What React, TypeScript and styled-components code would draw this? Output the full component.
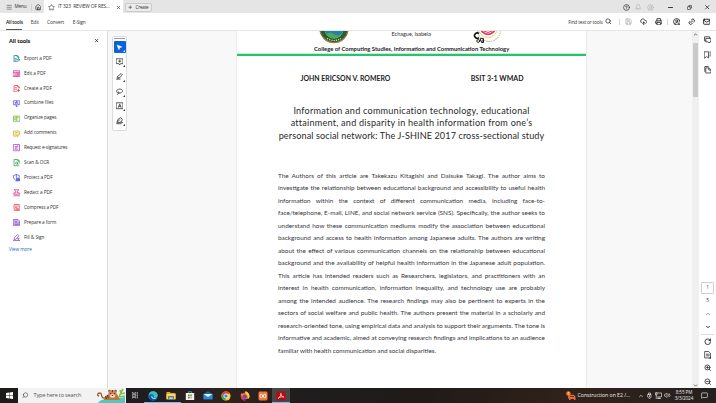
import React from "react";
import styled, { createGlobalStyle, css } from "styled-components";
import {
  Menu, House, Star, X, Plus, Search, Save, CloudUpload, Printer, Link2, Mail, Bell, CircleHelp, CircleUserRound,
  Minus, Copy, ChevronUp, ChevronDown, RotateCw, ZoomIn, ZoomOut, MousePointer2, Volume2, MessageSquare as Note,
} from "lucide-react";

const Global = createGlobalStyle`
  * { box-sizing: border-box; }
  body { margin: 0; overflow: hidden; background: #fff; font-family: "Open Sans", "Noto Sans", sans-serif; }
  svg { display: block; flex: none; }
`;

const Window = styled.div`
  width: 716px; height: 403px; display: grid; grid-template-rows: 13px 18px 357px 15px;
  background: #fff; color: #333; overflow: hidden;
`;
const Text = styled.span<{ $size?: number; $ls?: number; $w?: number; $color?: string }>`
  font-size: ${(p) => p.$size ?? 5}px; letter-spacing: ${(p) => p.$ls ?? 0}px; font-weight: ${(p) => p.$w ?? 400};
  color: ${(p) => p.$color ?? "#303030"}; white-space: pre; line-height: 1.2;
`;
const Spacer = styled.div`flex: 1;`;
const Gap = styled.div<{ $w: number }>`flex: 0 0 ${(p) => p.$w}px;`;

const TabBar = styled.header`display: flex; align-items: center; background: #e5e5e5; height: 13px; padding-top: 1.5px;`;
const MenuButton = styled.div`display: flex; align-items: center; gap: 2.5px; width: 31px; padding-left: 5.5px;`;
const HomeButton = styled.div`width: 13px; display: flex; justify-content: center; border-left: 1px solid #d0d0d0;`;
const Tab = styled.div`
  display: flex; align-items: center; width: 78.5px; height: 13px; margin-top: -1.5px; padding: 1.5px 5.5px 0 4px; background: #fff; gap: 3px;
`;
const CreateButton = styled.div`
  display: flex; align-items: center; gap: 3px; width: 27px; height: 9.5px; margin-left: 2px; padding-left: 2.5px;
  border: 1px solid #cacaca; border-radius: 2px; background: #ececec;
`;
const Toolbar = styled.nav`
  display: flex; align-items: center; height: 18px; border-bottom: 1px solid #e6e6e6; background: #fff; padding-left: 6px;
`;
const NavItem = styled.div<{ $w: number; $active?: boolean }>`
  width: ${(p) => p.$w}px; height: 17px; padding-top: 2px; display: flex; align-items: center;
  ${(p) => p.$active && css`box-shadow: inset 0 -1px #555;`}
`;
const FindBox = styled.div`display: flex; align-items: center; padding-top: 2px;`;
const Slot = styled.div<{ $w: number }>`width: ${(p) => p.$w}px; display: flex; justify-content: center; align-items: center;`;
const Divider = styled.div`width: 1px; height: 6px; background: #d5d5d5;`;

const Main = styled.div`display: grid; grid-template-columns: 108px 584px 7px 17px; min-height: 0;`;
const Panel = styled.aside`border-right: 1px solid #dedede; background: #fff;`;
const PanelHead = styled.div`display: flex; align-items: center; justify-content: space-between; height: 20px; padding: 0 7.5px 0 9px;`;
const ToolRow = styled.div`display: flex; align-items: center; height: 14.95px; padding-left: 12.5px; gap: 4.2px;`;
const ViewMore = styled.div`padding-left: 9px; height: 10px; display: flex; align-items: center;`;

const Canvas = styled.main`display: flex; align-items: flex-start; background: #f8f8f8; overflow: hidden;`;
const QuickBar = styled.div`
  width: 15px; height: 95px; margin: 4.5px 0 0 4px; display: flex; flex-direction: column; align-items: center;
  background: #fff; border: 1px solid #dcdcdc; border-radius: 2px;
`;
const Grip = styled.div`width: 11px; height: 1px; margin: 1.5px 0 2.2px; background: #999;`;
const Quick = styled.div<{ $active?: boolean }>`
  position: relative; width: 12px; height: 12.5px; margin-bottom: 2.5px; display: flex; align-items: center; justify-content: center;
  color: ${(p) => (p.$active ? "#fff" : "#333")}; background: ${(p) => (p.$active ? "#0b62dc" : "transparent")};
  border-radius: 1px;
  &::after {
    content: ""; position: absolute; right: 0.5px; bottom: 1px; border-style: solid; border-width: 0 0 2px 2px;
    border-color: transparent transparent currentColor transparent;
  }
`;
const Page = styled.article`
  width: 349px; height: 357px; margin-left: 110px; background: #fff; box-shadow: 0 0 0 1px #ececec;
  font-family: Lato, "Liberation Sans", sans-serif; color: #222;
`;
const PageHead = styled.div`height: 13px; display: flex; align-items: flex-start;`;
const College = styled.div`height: 9px; display: flex; align-items: center; padding-left: 77px;`;
const Rule = styled.div`height: 3px; border-top: 1px solid #c2efd5; border-bottom: 2px solid #25c56e;`;
const Authors = styled.div`height: 22px; margin-top: 11px; padding-left: 63.5px; display: flex; align-items: center;`;
const Title = styled.h1`
  margin: 15.5px 0 0; font-size: 9.1px; font-weight: 400; line-height: 12.5px; text-align: center; color: #2a2a2a; white-space: nowrap;
`;
const TitleLine = styled.div<{ $ls: number }>`letter-spacing: ${(p) => p.$ls}px;`;
const Body = styled.div`margin: 27.5px 41px 0 41px; font-size: 6.4px; line-height: 12.54px; color: #35353d;`;
const BodyLine = styled.div<{ $last?: boolean }>`
  width: 267px; white-space: nowrap; height: 12.54px; word-spacing: -0.2px; text-align-last: ${(p) => (p.$last ? "left" : "justify")};
`;

const ScrollTrack = styled.div`background: #f0f0f0; display: flex; flex-direction: column; align-items: center; color: #555;`;
const Thumb = styled.div`width: 5.5px; height: 54px; margin: 6px 0 auto; background: #c9c9c9;`;
const Rail = styled.aside`display: flex; flex-direction: column; align-items: center; background: #fff; color: #333;`;
const RailItem = styled.div<{ $h: number }>`height: ${(p) => p.$h}px; display: flex; align-items: center; justify-content: center;`;
const PageBox = styled.div`width: 13px; height: 12px; margin-top: 1px; border: 1px solid #cfcfcf; border-radius: 1px; display: flex; align-items: center; justify-content: center;`;
const RailRule = styled.div`width: 13px; height: 1px; background: #ddd;`;

const Taskbar = styled.footer`
  display: flex; align-items: center; height: 15px; color: #eee;
  background: linear-gradient(90deg, #1d1b1a 0, #1f1d20 20%, #30231e 32%, #1f1d1d 42%, #201b19 60%, #31221b 80%, #242120 100%);
`;
const SearchBox = styled.div`width: 108px; height: 15px; background: #f2f2f2; display: flex; align-items: center; padding-left: 4px; gap: 5px; overflow: hidden;`;
const TaskButton = styled.div<{ $open?: boolean; $active?: boolean }>`
  width: 18.3px; height: 15px; display: flex; align-items: center; justify-content: center;
  background: ${(p) => (p.$active ? "#4a4748" : "transparent")};
  ${(p) => (p.$open || p.$active) && css`box-shadow: inset 0 -1px #76b9ed;`}
`;
const Clock = styled.div`width: 20px; display: flex; flex-direction: column; align-items: center; gap: 0.8px;`;

const Stroke = styled.svg<{ $color?: string; $weight?: number }>`
  fill: none; stroke: ${(p) => p.$color ?? "currentColor"}; stroke-width: ${(p) => p.$weight ?? 1.5};
  stroke-linecap: round; stroke-linejoin: round; color: ${(p) => p.$color ?? "inherit"};
`;
const Glyph = ({ size = 7.5, color, weight, children }: { size?: number; color?: string; weight?: number; children: React.ReactNode }) => (
  <Stroke width={size} height={size} viewBox="0 0 14 14" $color={color} $weight={weight}>{children}</Stroke>
);

const tools: [string, string, number, React.ReactNode][] = [
  ["Export a PDF", "#138b8c", -0.08, <><path d="M11 6V4L8 1H2v12h8M8 1v3h3M4 7h2M4 10h2" /><path d="M7 9h6m-2-2 2 2-2 2" /></>],
  ["Edit a PDF", "#d83790", -0.06, <><path d="M1 1.5h12v11H1ZM1 4.5h12M7.5 4.5v8M3 7.5h2.5M3 10h2.5" /><path d="M9.5 7h2v3h-2z" /></>],
  ["Create a PDF", "#e34850", -0.05, <><path d="M12 6V4L9 1H2v12h5M9 1v3h3M4.5 5h2M4.5 8h3" /><path d="M10.5 8v5M8 10.5h5" /></>],
  ["Combine files", "#5c5ce0", -0.04, <><path d="M4 9H1V1.5h6v2M7 3.5V1.5h6V9h-3" /><path d="M4.5 5h5v3.5M4.5 5v3.5M7 7v6m-2-2 2 2 2-2" /></>],
  ["Organize pages", "#71b53b", -0.13, <><path d="M6 2H1v10h5M8 2h5v10H8zM6 5H3.5v4H6M8 5h2" /></>],
  ["Add comments", "#d0ad12", -0.08, <><path d="M12 7V2H1v9h2v2l2.5-2H7M4 5h5M4 8h3" /><path d="m8 12 .5-2L12 6.5l1.5 1.5L10 11.5z" /></>],
  ["Request e-signatures", "#b848cb", -0.16, <><path d="M1.5 1h11v12h-11zM4 10h6M4 5h1" /><path d="m5 8 1-2.5L9 3l1 1-2.5 3z" /></>],
  ["Scan & OCR", "#31a354", -0.08, <><path d="M12 8V4L9 1H2v12h8M9 1v3h3" /><circle cx="7" cy="8" r="2" /><path d="m8.5 9.5 3 3" /></>],
  ["Protect a PDF", "#5258e4", -0.1, <><path d="M6.5 13C3 11 1 9 1 6V3l5.5-2L12 3v3M6.5 1v12" /><path fill="currentColor" d="M8 9.5h5v3.5H8z" /><path d="M9 9V7.5h3V9" /></>],
  ["Redact a PDF", "#d83790", -0.06, <><path d="M3 1.5h8L8.5 5v2.5h4V10h-11V7.5h4V5ZM1.5 13h11" /></>],
  ["Compress a PDF", "#e34850", -0.12, <><path d="M12 7V1H2v9h5M4.5 4h5M4.5 7h3" /><path d="M2 13h4M8 9h4v4H8zM9 11h2" /></>],
  ["Prepare a form", "#8f4fd0", -0.09, <><path fill="#d9c1f1" d="M1.5 1h8l3 3v9h-11z" /><path d="M4 4.5h3M4 7.5h6M4 10.5h6" /></>],
  ["Fill & Sign", "#8f4fd0", -0.08, <><path d="M1 12.5h12M2 10l1-3.5L9 1l2.5 2.5L6 9.5zM8 9l4-1-2 3" /></>],
];

const quick: React.ReactNode[] = [
  <MousePointer2 size={6.5} strokeWidth={2} fill="#fff" />,
  <Glyph><path d="M1 1.5h12v9H8.5L7 13l-1.5-2.5H1zM7 4v4M5 6h4" /></Glyph>,
  <Glyph><path d="m2 10 1-3.5L9.5 1 12 3.5 6 9.5zM3.5 7 6 9.5M1 13h5l2-1.5" /></Glyph>,
  <Glyph><path d="M3 9C-.5 7 1 2 7 2s7 5.5 2 7c-3 1-5 .5-5-1s2-1 1.5 1S4 12 2.5 12" /></Glyph>,
  <Glyph><path d="M1 1.5h12v11H1zM4.5 10 7 4l2.5 6M5.5 8h3" /></Glyph>,
  <Glyph><path d="M1 12.5h9M2 9.5 4 4l5-3 3 4-3 4.5zM3 9l4-4M9 9.5l4 1" /></Glyph>,
];

const bodyLines = [
  "The Authors of this article are Takekazu Kitagishi and Daisuke Takagi. The author aims to",
  "investigate the relationship between educational background and accessibility to useful health",
  "information within the context of different communication media, including face-to-",
  "face/telephone, E-mail, LINE, and social network service (SNS). Specifically, the author seeks to",
  "understand how these communication mediums modify the association between educational",
  "background and access to health information among Japanese adults. The authors are writing",
  "about the effect of various communication channels on the relationship between educational",
  "background and the availability of helpful health information in the Japanese adult population.",
  "This article has intended readers such as Researchers, legislators, and practitioners with an",
  "interest in health communication, information inequality, and technology use are probably",
  "among the intended audience. The research findings may also be pertinent to experts in the",
  "sectors of social welfare and public health. The authors present the material in a scholarly and",
  "research-oriented tone, using empirical data and analysis to support their arguments. The tone is",
  "informative and academic, aimed at conveying research findings and implications to an audience",
  "familiar with health communication and social disparities.",
];

const SealLogo = () => (
  <svg width="30" height="13" viewBox="0 0 30 13">
    <circle cx="15" cy="-2.5" r="14.2" fill="#245f38" stroke="#a47c3d" strokeWidth="1.2" />
    <circle cx="15" cy="-2" r="9.4" fill="#e9d34b" />
    <path d="M6 0h18c-1 4-4 7-9 7S7 4 6 0Z" fill="#2380ac" />
    <path d="M7 3q4-3 8 0t8-1c-2 4-5 5-8 5s-6-1-8-4Z" fill="#50a65a" />
    <path d="M8 7.5q7 4 14 0" fill="none" stroke="#dfe9c7" strokeWidth="1.1" strokeDasharray="1.2 1.1" />
  </svg>
);
const GearLogo = () => (
  <svg width="30" height="14" viewBox="0 0 30 14">
    <circle cx="17" cy="-1" r="11.5" fill="#fff" stroke="#c9c0ac" strokeWidth="1.2" strokeDasharray="1.6 .8" />
    <circle cx="16" cy="-3" r="9.5" fill="#fff" stroke="#f0cf6c" strokeWidth="1" />
    <circle cx="16" cy="-4" r="7.3" fill="#fff" stroke="#e72f62" strokeWidth="1.8" />
    <path d="M12 0l4 1.5L20 0" fill="none" stroke="#d93a4d" strokeWidth="1" />
    <path d="M7 2.5A2.7 2.7 0 1 0 7 6.7" fill="none" stroke="#171717" strokeWidth="1.7" />
    <circle cx="6.2" cy="10" r="1.4" fill="none" stroke="#222" />
    <circle cx="9.9" cy="8.8" r="1.6" fill="none" stroke="#222" strokeWidth="1.1" />
    <path d="M11.5 7.5v4H9.3" fill="none" stroke="#222" />
  </svg>
);
const Tiger = () => (
  <svg width="29" height="15" viewBox="0 0 29 15">
    <path d="M1 15q2-4 11-4t16-2v6Z" fill="#58c6bf" />
    <path d="M22 9q2-5 4-8m-3 5 5-1m-6 4 6-1M24 5l-1-3" stroke="#83bf49" strokeWidth="1.6" fill="none" />
    <path d="M8 10C3 11 6 5 3 5S0 8 2 8" fill="none" stroke="#9b572d" strokeWidth="1.3" />
    <path d="M7 12q0-5 6-6h7l3 6Z" fill="#b97542" />
    <circle cx="12.5" cy="3" r="1.3" fill="#8c512d" /><circle cx="18.5" cy="3" r="1.3" fill="#8c512d" />
    <ellipse cx="15.5" cy="6" rx="4.2" ry="4" fill="#c98550" />
    <ellipse cx="15.5" cy="8" rx="2.5" ry="1.8" fill="#f1dfc9" />
    <path d="M13 5.5h1m3 0h1m-3.2 2h1.4M15.5 2v2M8.5 8l1 3m1-4 .5 3" stroke="#3d2a22" strokeWidth=".8" />
  </svg>
);
const Edge = () => (
  <svg width="10" height="10" viewBox="0 0 10 10">
    <circle cx="5" cy="5" r="4.7" fill="#1475c4" />
    <path d="M.4 4.6C.8 1.8 2.8.3 5 .3c3 0 4.8 2.2 4.7 4.3-.1 1.7-1.6 2.3-3 2.1-1-.1-1.4-.6-.8-1.2C6.8 3 2 2 .4 4.6Z" fill="#3ac5b1" />
    <path d="M3.6 4.7C2.4 7 5 9 8.4 8.2 6 10.9 1.4 9.3 1.4 6.4c0-1 .8-2 2.2-1.7Z" fill="#0c4f9b" />
    <path d="M4.2 4.7c-.8 1.8 1.6 3 4.6 2.1-1.7 1.7-5.5 1.2-5.6-1Z" fill="#d9f1fa" />
  </svg>
);
const Folder = () => (
  <svg width="10" height="9" viewBox="0 0 10 9"><path d="M.5 1h3.3l1 1h4.7v6.3h-9Z" fill="#e9a623" /><path d="M.5 3h9v5.3h-9Z" fill="#ffd75b" /><path d="M2 5h6v3.3H6.7V6.6H3.3v1.7H2Z" fill="#3a8bd2" /></svg>
);
const Store = () => (
  <svg width="10" height="10" viewBox="0 0 10 10"><path d="M3.3 2V.8h3.4V2" fill="none" stroke="#35b3e8" strokeWidth=".8" /><path d="M.8 2h8.4v7H.8Z" fill="#f3f3f3" /><path d="M3 3.5h1.7v1.7H3Z" fill="#e44b2c" /><path d="M5.3 3.5H7v1.7H5.3Z" fill="#69a91d" /><path d="M3 5.8h1.7v1.7H3Z" fill="#1d91d0" /><path d="M5.3 5.8H7v1.7H5.3Z" fill="#f5b51a" /></svg>
);
const MailApp = () => (
  <svg width="10" height="9" viewBox="0 0 10 9"><path d="M.5 3 5 .3 9.5 3v5.3h-9Z" fill="#1069b5" /><path d="M.5 3h9v5.3h-9Z" fill="#258bdc" /><path d="M.7 3h8.6L5 6Z" fill="#f3f8fb" /></svg>
);
const Chrome = () => (
  <svg width="10" height="10" viewBox="0 0 10 10"><circle cx="5" cy="5" r="4.6" fill="#f9c932" /><path d="M1 2.7a4.6 4.6 0 0 1 8 0H5L3 6Z" fill="#e54335" /><path d="M1 2.7 3.2 6.1l2 1.2L4 9.5A4.6 4.6 0 0 1 1 2.7Z" fill="#34a853" /><circle cx="5" cy="5" r="2.1" fill="#4285f4" stroke="#fff" strokeWidth=".7" /></svg>
);
const Firefox = () => (
  <svg width="10" height="10" viewBox="0 0 10 10"><path d="M1.2 2 2 3 3.2 1.8 4 3l1.4-2.8C8 1 9.5 3 9.5 5.6A4.4 4.4 0 1 1 1.2 2Z" fill="#ff7c27" /><path d="M5.4.2C8 1 9.5 3 9.5 5.6c0 1-.4 2-1 2.7Q8 3.5 5.4 2.7Z" fill="#ffd035" /><circle cx="4.8" cy="5.7" r="2.1" fill="#7544bc" /><path d="M.7 4.8C.4 8.5 3.5 10.3 6 9.7 3.5 9 2.5 7 2.6 5Z" fill="#ed315d" /></svg>
);
const Xampp = () => (
  <svg width="10" height="10" viewBox="0 0 10 10"><rect x=".5" y=".5" width="9" height="9" rx="1.4" fill="#ef7934" /><path d="M3.3 3q-1.5 0-1.3 2t1.3 2M6.7 3Q8.2 3 8 5T6.7 7M3.5 3 6.5 7m0-4-3 4" fill="none" stroke="#fff" strokeWidth=".9" /></svg>
);
const Acrobat = () => (
  <svg width="10" height="10" viewBox="0 0 10 10"><rect x=".4" y=".4" width="9.2" height="9.2" rx="1" fill="#b40c0c" /><path d="M2.2 7.4C4 6.5 5 4 4.9 2.3c0 2 1.3 3.6 3 3.7C6 5.4 3.5 6 2.2 7.4Z" fill="none" stroke="#fff" strokeWidth=".7" /></svg>
);
const Traffic = () => (
  <svg width="10" height="10" viewBox="0 0 10 10"><path d="M2 7V5.7l1.2-2h4.6L9.5 5.7V9H8V8H4.5v1H3V8Z" fill="#ea6a34" /><circle cx="2.4" cy="2.5" r="2.2" fill="#f18127" /><path d="M2.4 1.2v1.4m0 .5v.6" stroke="#fff" strokeWidth=".6" /><path d="M4 5.5h4" stroke="#35211b" strokeWidth=".7" /></svg>
);
const WindowsLogo = () => (
  <svg width="7" height="7" viewBox="0 0 7 7"><path d="M0 1 3.2.5v2.8H0ZM3.6.4 7 0v3.3H3.6ZM0 3.7h3.2v2.8L0 6ZM3.6 3.7H7V7l-3.4-.5Z" fill="#fff" /></svg>
);

export default function App() {
  return (
    <Window>
      <Global />
      <TabBar>
        <MenuButton><Menu size={6.5} color="#444" /><Text $size={4.7} $ls={-0.17}>Menu</Text></MenuButton>
        <HomeButton><House size={6.5} color="#222" strokeWidth={2.4} /></HomeButton>
        <Tab>
          <Star size={7} color="#333" />
          <Text $size={4.9} $ls={-0.13}>IT 323  REVIEW OF RES...</Text>
          <Spacer /><X size={5} color="#333" strokeWidth={3} />
        </Tab>
        <CreateButton><Plus size={4.5} color="#333" strokeWidth={3} /><Text $size={4.5} $ls={-0.14}>Create</Text></CreateButton>
        <Spacer />
        <Slot $w={12}><CircleHelp size={7} color="#333" strokeWidth={2.4} /></Slot>
        <Slot $w={12}><Bell size={6.5} color="#aaa" /></Slot>
        <Slot $w={12}><CircleUserRound size={7} color="#b4b4b4" /></Slot>
        <Gap $w={8.5} />
        <Slot $w={11}><Minus size={7} color="#222" strokeWidth={3} /></Slot>
        <Gap $w={7.5} />
        <Slot $w={11}><Copy size={5} color="#222" strokeWidth={3} transform="scale(-1 1)" /></Slot>
        <Gap $w={7} />
        <Slot $w={11}><X size={6.5} color="#222" strokeWidth={2.8} /></Slot>
        <Gap $w={3.5} />
      </TabBar>
      <Toolbar>
        <NavItem $w={16} $active><Text $size={4.9} $ls={-0.22} $w={600} $color="#222">All tools</Text></NavItem>
        <Gap $w={8.7} />
        <NavItem $w={16.3}><Text $size={4.8} $ls={-0.05}>Edit</Text></NavItem>
        <NavItem $w={25.7}><Text $size={4.8} $ls={-0.05}>Convert</Text></NavItem>
        <NavItem $w={20}><Text $size={4.8} $ls={-0.1}>E-Sign</Text></NavItem>
        <Spacer />
        <FindBox><Text $size={4.8} $ls={-0.2}>Find text or tools</Text></FindBox>
        <Slot $w={12}><Search size={6.5} strokeWidth={2.8} /></Slot>
        <Gap $w={4} /><Divider /><Gap $w={1.5} />
        <Slot $w={15}><Save size={7} color="#999" /></Slot>
        <Slot $w={15}><CloudUpload size={7.5} color="#222" strokeWidth={2.7} /></Slot>
        <Slot $w={15}><Printer size={7.5} color="#222" strokeWidth={2.7} /></Slot>
        <Gap $w={1} /><Divider /><Gap $w={1} />
        <Slot $w={15}><Glyph color="#222"><path d="M7 13A6 6 0 1 1 13 7" /><circle cx="7" cy="5.5" r="2" /><path d="M3 11q1-3 5-3M11 9v5M8.5 11.5h5" /></Glyph></Slot>
        <Slot $w={15}><Link2 size={7.5} color="#222" strokeWidth={2.7} transform="rotate(-45)" /></Slot>
        <Slot $w={15}><Mail size={7.5} color="#222" strokeWidth={3} /></Slot>
        <Gap $w={2} />
      </Toolbar>
      <Main>
        <Panel>
          <PanelHead><Text $size={5.6} $w={700} $ls={-0.15} $color="#222">All tools</Text><X size={5.2} color="#222" strokeWidth={3.5} /></PanelHead>
          {tools.map(([name, color, ls, drawing]) => (
            <ToolRow key={name}><Glyph size={7.3} color={color}>{drawing}</Glyph><Text $size={4.75} $ls={ls}>{name}</Text></ToolRow>
          ))}
          <ViewMore><Text $size={4.8} $ls={-0.1} $color="#1667b5">View more</Text></ViewMore>
        </Panel>
        <Canvas>
          <QuickBar>
            <Grip />
            {quick.map((drawing, i) => <Quick key={i} $active={i === 0}>{drawing}</Quick>)}
          </QuickBar>
          <Page>
            <PageHead>
              <Gap $w={81.5} /><SealLogo /><Gap $w={43} />
              <Text $size={5.5} $color="#333">Echague, Isabela</Text>
              <Spacer /><GearLogo /><Gap $w={84} />
            </PageHead>
            <College><Text $size={5.86} $w={700} $color="#222">College of Computing Studies, Information and Communication Technology</Text></College>
            <Rule />
            <Authors>
              <Text $size={6.9} $w={700} $color="#1b1b1b">JOHN ERICSON V. ROMERO</Text>
              <Spacer /><Text $size={7} $w={700} $color="#1b1b1b">BSIT 3-1 WMAD</Text><Gap $w={62.5} />
            </Authors>
            <Title>
              <TitleLine $ls={0.23}>Information and communication technology, educational</TitleLine>
              <TitleLine $ls={0.23}>attainment, and disparity in health information from one’s</TitleLine>
              <TitleLine $ls={0.105}>personal social network: The J-SHINE 2017 cross-sectional study</TitleLine>
            </Title>
            <Body>
              {bodyLines.map((line, i) => <BodyLine key={line} $last={i === bodyLines.length - 1}>{line}</BodyLine>)}
            </Body>
          </Page>
        </Canvas>
        <ScrollTrack>
          <RailItem $h={6}><ChevronUp size={5} strokeWidth={4} /></RailItem>
          <Thumb />
          <RailItem $h={6}><ChevronDown size={5} strokeWidth={4} /></RailItem>
        </ScrollTrack>
        <Rail>
          <Gap $w={1.5} />
          <RailItem $h={14.8}><Glyph><path d="M3.5 9H1V1.5h9.5V4" /><path d="M4 4.5h9V11h-2l-1.5 2L8 11H4z" /></Glyph></RailItem>
          <RailItem $h={15}><Glyph><path d="M1 1.5h7.5V13L5 10.5 1 13zM11 2h2M11 5.5h2M11 9h2" /></Glyph></RailItem>
          <RailItem $h={15}><Glyph><path d="M4 3.5h5.5L13 7v6H4zM9 4v3.5h4" /><path d="M1.5 10V1H8" /></Glyph></RailItem>
          <Spacer />
          <PageBox><Text $size={4.5} $color="#27476b">1</Text></PageBox>
          <RailItem $h={14}><Text $size={4.8}>5</Text></RailItem>
          <RailItem $h={13}><ChevronUp size={6} color="#777" strokeWidth={3} /></RailItem>
          <RailItem $h={13}><ChevronDown size={6} strokeWidth={4} /></RailItem>
          <RailRule />
          <RailItem $h={13.3}><RotateCw size={7.5} strokeWidth={3} /></RailItem>
          <RailItem $h={13.3}><Glyph><path d="M2 1h6.5L12 4v9H2zM4.5 6h5M4.5 9h5" /><path fill="currentColor" d="m13.5 11v2.5H11z" /></Glyph></RailItem>
          <RailItem $h={13.3}><ZoomIn size={7.5} strokeWidth={2.8} /></RailItem>
          <RailItem $h={13.3}><ZoomOut size={7.5} strokeWidth={2.8} /></RailItem>
        </Rail>
      </Main>
      <Taskbar>
        <Slot $w={18}><WindowsLogo /></Slot>
        <SearchBox>
          <Search size={6.5} color="#333" transform="scale(-1 1)" />
          <Text $size={5.6} $ls={-0.2} $color="#555">Type here to search</Text>
          <Spacer /><Tiger />
        </SearchBox>
        <Slot $w={18}><Glyph size={6.5} color="#ddd"><path d="M1 1v1.5h7V1M1 13v-1.5h7V13M1 5h7v4H1zM11.5 1v3M11.5 6v2M11.5 10v3" /></Glyph></Slot>
        <TaskButton $open><Edge /></TaskButton>
        <TaskButton $open><Folder /></TaskButton>
        <TaskButton><Store /></TaskButton>
        <TaskButton><MailApp /></TaskButton>
        <TaskButton><Chrome /></TaskButton>
        <TaskButton><Firefox /></TaskButton>
        <TaskButton><Xampp /></TaskButton>
        <TaskButton $active><Acrobat /></TaskButton>
        <Spacer />
        <Traffic /><Gap $w={2} />
        <Text $size={5.2} $ls={-0.04} $color="#eee">Construction on E2 /...</Text>
        <Gap $w={6} />
        <Slot $w={9}><ChevronUp size={6} strokeWidth={2.5} /></Slot>
        <Slot $w={9}><Glyph size={7} weight={1.3}><path d="M4 5h6v6q-3 4-6 0zM5 5V2h4v3M7 7v3" /></Glyph></Slot>
        <Slot $w={9}><Glyph size={7} weight={1.3}><path d="M4 2h9v8H5M8 10v3M5 13h6M1 2v4h3V2zM2.5 6v7" /></Glyph></Slot>
        <Slot $w={9}><Volume2 size={6.5} strokeWidth={2.2} /></Slot>
        <Gap $w={2} />
        <Clock><Text $size={4.6} $ls={-0.08} $color="#eee">8:55 PM</Text><Text $size={4.6} $ls={-0.1} $color="#eee">3/3/2024</Text></Clock>
        <Gap $w={3} />
        <Slot $w={14}><Note size={7} strokeWidth={2.2} /></Slot>
        <Gap $w={5} />
      </Taskbar>
    </Window>
  );
}
